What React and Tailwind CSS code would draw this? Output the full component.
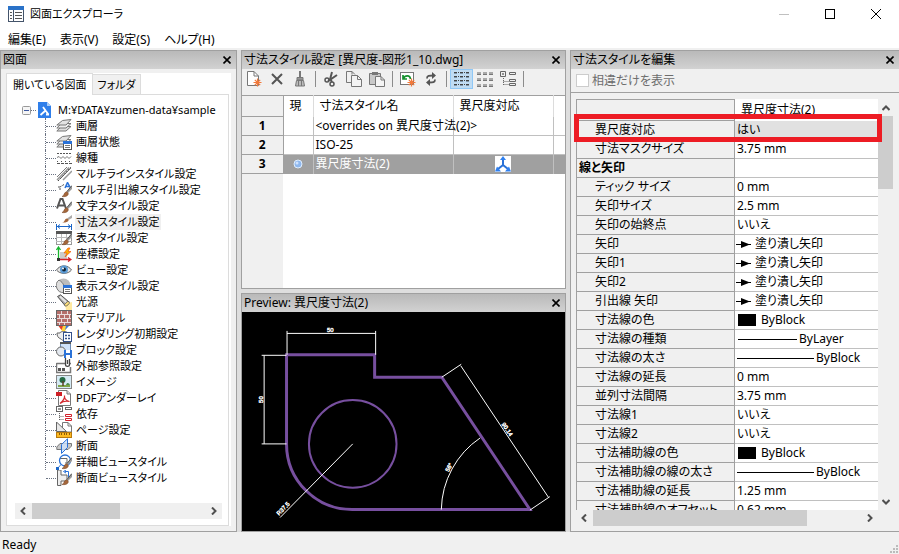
import React, { useState } from "react";

const menus = ["編集(E)", "表示(V)", "設定(S)", "ヘルプ(H)"];

const properties = [
    { name: "寸法マスクサイズ", value: "3.75 mm" },
    { name: "線と矢印", group: true },
    { name: "ティック サイズ", value: "0 mm" },
    { name: "矢印サイズ", value: "2.5 mm" },
    { name: "矢印の始終点", value: "いいえ" },
    { name: "矢印", value: "塗り潰し矢印", kind: "arrow" },
    { name: "矢印1", value: "塗り潰し矢印", kind: "arrow" },
    { name: "矢印2", value: "塗り潰し矢印", kind: "arrow" },
    { name: "引出線 矢印", value: "塗り潰し矢印", kind: "arrow" },
    { name: "寸法線の色", value: "ByBlock", kind: "color" },
    { name: "寸法線の種類", value: "ByLayer", kind: "linetype" },
    { name: "寸法線の太さ", value: "ByBlock", kind: "weight" },
    { name: "寸法線の延長", value: "0 mm" },
    { name: "並列寸法間隔", value: "3.75 mm" },
    { name: "寸法線1", value: "いいえ" },
    { name: "寸法線2", value: "いいえ" },
    { name: "寸法補助線の色", value: "ByBlock", kind: "color" },
    { name: "寸法補助線の線の太さ", value: "ByBlock", kind: "weight" },
    { name: "寸法補助線の延長", value: "1.25 mm" },
    { name: "寸法補助線のオフセット", value: "0.62 mm" },
];

const Icon = ({ children }) => (
    <svg width="16" height="16" viewBox="0 0 16 16" fill="none" className="shrink-0">
        {children}
    </svg>
);

// small paint brush, shared by the style icons
const Brush = () => (
    <>
        <path d="M16 3L10.5 9.5L12 11L16 7Z" fill="#9a9a9a" />
        <path d="M15.5 4L11 9.5" stroke="#555" />
        <path d="M6 14.5C8.5 14 7.500 10.500 10.500 9.800C13.500 10.500 13 15.500 6 14.500Z" fill="#a5673b" stroke="#7c4a28" strokeWidth=".6" />
    </>
);

// blue dialog window in the lower right corner
const MiniWindow = () => (
    <>
        <rect x="7.500" y="7.500" width="8" height="8" fill="#fff" stroke="#555" />
        <path d="M7 7H16V10H7Z" fill="#2a72d8" />
        <path d="M9 11.500H14M9 13.500H14" stroke="#777" />
    </>
);

const Sheets = () => (
    <>
        <path d="M.8 13L5.500 8.500H15L10 13Z" fill="#ddd" stroke="#777" />
        <path d="M.8 10L5.500 5.500H15L10 10Z" fill="#eee" stroke="#777" />
        <path d="M.8 7L6.500 2.500L15 1.500L10 7Z" fill="#e2e2e2" stroke="#777" />
    </>
);

const treeItems = [
    { name: "画層", icon: <Sheets /> },
    { name: "画層状態", icon: <><Sheets /><MiniWindow /></> },
    {
        name: "線種",
        icon: (
            <>
                <path d="M1 3.500H16" stroke="#555" strokeDasharray="2 1" />
                <path d="M1 7.500L3 6.500L5 8.500L7 6.500L9 8.500L11 6.500L13 8.500L15 6.500" stroke="#777" />
                <path d="M1 11.500H16" stroke="#555" strokeDasharray="1 3" />
                <path d="M1 13.500H16" stroke="#555" strokeDasharray="3 1" />
            </>
        ),
    },
    {
        name: "マルチラインスタイル設定",
        icon: (
            <>
                <path d="M1 11L11 1M4 13L15 2" stroke="#777" />
                <path d="M1 14L13 1.500M7 14L16 5" stroke="#999" strokeWidth="1.500" />
                <path d="M2 15L15 1" stroke="#444" strokeDasharray="2 1" />
            </>
        ),
    },
    {
        name: "マルチ引出線スタイル設定",
        icon: (
            <>
                <path d="M9 6L11.500 .5L14.500 6M10 4.500H13.500" stroke="#2a72d8" strokeWidth="1.500" />
                <path d="M8 2.500L4 5M3 4V7H6" stroke="#555" strokeDasharray="2 1" />
                <Brush />
            </>
        ),
    },
    {
        name: "文字スタイル設定",
        icon: (
            <>
                <path d="M1 10.500L4.500 1H6.500L10 10.500M2.500 7.500H9" stroke="#555" strokeWidth="2" />
                <Brush />
            </>
        ),
    },
    {
        name: "寸法スタイル設定",
        selected: true,
        icon: (
            <>
                <path d="M16 1L11 4.500L12.500 6L16 4Z" fill="#aaa" />
                <path d="M6 8.500C9 8.500 8 5 11 4.500C14 5.500 13 9 6 8.500Z" fill="#a5673b" />
                <path d="M.5 10V16M15.500 10V16" stroke="#1a66c8" />
                <path d="M1 12.500H15M4 10.500L1.500 12.500L4 14.500M12 10.500L14.500 12.500L12 14.500" stroke="#1a66c8" />
            </>
        ),
    },
    {
        name: "表スタイル設定",
        icon: (
            <>
                <rect x=".5" y="1.500" width="15" height="13" fill="#fff" stroke="#999" />
                <path d="M0 1H16V4H0Z" fill="#555" />
                <path d="M0 7.500H16M0 11.500H16M5.500 4V15M10.500 4V15" stroke="#bbb" />
                <Brush />
            </>
        ),
    },
    {
        name: "座標設定",
        icon: (
            <>
                <rect x="4" y="6" width="7" height="7" fill="#ccc" />
                <path d="M2.500 14V2M.5 4L2.500 1L4.500 4" stroke="#16b52c" strokeWidth="1.300" />
                <path d="M2 13.500H14M12 11.500L15 13.500L12 15.500" stroke="#d3202a" strokeWidth="1.300" />
                <path d="M12 2L8 7H11L9 11L15 5.500H12L14 2Z" fill="#ffb400" stroke="#f05a10" strokeWidth=".7" />
                <rect x="1" y="12" width="3" height="3" fill="#333" />
            </>
        ),
    },
    {
        name: "ビュー設定",
        icon: (
            <>
                <path d="M.5 8C4 2.500 12 2.500 15.500 8C12 12.500 4 12.500 .5 8Z" fill="#e6e6e6" stroke="#666" />
                <circle cx="8" cy="7.500" r="4" fill="#5b9bd5" />
                <circle cx="8" cy="7.500" r="2" fill="#123" />
                <circle cx="7" cy="6.500" r="1" fill="#fff" />
            </>
        ),
    },
    {
        name: "表示スタイル設定",
        icon: (
            <>
                <circle cx="7.500" cy="7.500" r="7" fill="#bcbcbc" />
                <path d="M3 2C8 5 9 9 8 14.500A7 7 0 0 1 3 2Z" fill="#dedede" stroke="#777" />
                <MiniWindow />
            </>
        ),
    },
    {
        name: "光源",
        icon: (
            <>
                <path d="M9 10L16 8V16H10Z" fill="#ffe9a0" />
                <path d="M1.500 2.500L4.500 .8L13 8L9 11.500Z" fill="#a8a8a8" stroke="#555" />
                <path d="M4 2.500L11 9" stroke="#e5e5e5" strokeWidth="2" />
                <ellipse cx="11" cy="9.800" rx="3" ry="1.500" transform="rotate(-42 11 9.800)" fill="#ffe07a" stroke="#555" strokeWidth=".7" />
            </>
        ),
    },
    {
        name: "マテリアル",
        icon: (
            <>
                <rect x=".5" y=".5" width="15" height="15" fill="#b56e6a" stroke="#666" />
                <path d="M1 4.500H15M1 8.500H15M1 12.500H15M5.500 1V4M11.500 1V4M8.500 5V8M3.500 5V8M13.500 5V8M5.500 9V12M11.500 9V12M8.500 13V15M3.500 13V15" stroke="#eadcdc" />
            </>
        ),
    },
    {
        name: "レンダリング初期設定",
        icon: (
            <>
                <path d="M3 0L6 5H9L12 0Z" fill="#ffd23c" />
                <path d="M2.500 0L5.500 4L7 0Z" fill="#e23b2e" />
                <path d="M10 0L9 4L13 0Z" fill="#3c78e0" />
                <path d="M1 7H4C4 5 11 5 12 7V12C10 15 6 15 5 13C2 12 1 10 1 7Z" fill="#eee" stroke="#666" />
                <rect x="7.500" y="6.500" width="8" height="9" fill="#fff" stroke="#33508a" />
                <path d="M9 9.500H14M9 12.500H14" stroke="#33508a" strokeWidth="1.500" strokeDasharray="2 1" />
            </>
        ),
    },
    {
        name: "ブロック設定",
        icon: (
            <>
                <rect x="4.500" y=".5" width="10" height="10" fill="#cfe2fa" stroke="#6d8db5" />
                <path d="M4 0H15V2H4Z" fill="#555" />
                <circle cx="5" cy="9.500" r="4.500" fill="#e3e8ef" stroke="#666" />
                <rect x="8" y="8" width="8" height="8" fill="#2a72d8" />
                <path d="M10 8H14V11H10ZM10 13H14V16H10Z" fill="#fff" />
            </>
        ),
    },
    {
        name: "外部参照設定",
        icon: (
            <>
                <path d="M.5 5.500H9M13.500 5.500H15M.5 5V14.500H14.500V9" stroke="#777" strokeWidth="1.500" />
                <path d="M9.500 0V6.500C9.500 9 13.500 9 13.500 6.500V1M11.500 2V6" stroke="#444" strokeWidth="1.300" />
                <path d="M2 10H5V13H2ZM6 10H9V13H6Z" fill="#555" />
            </>
        ),
    },
    {
        name: "イメージ",
        icon: (
            <>
                <rect x=".5" y="1.500" width="15" height="13" fill="#d6ebf5" stroke="#888" />
                <path d="M2 11H14V13H2Z" fill="#7fa548" />
                <circle cx="6.500" cy="6" r="3" fill="#256b45" />
                <path d="M7 7V12" stroke="#5b4028" strokeWidth="1.500" />
                <path d="M10 11C11 8 13 9 14 11Z" fill="#4c8c50" />
            </>
        ),
    },
    {
        name: "PDFアンダーレイ",
        icon: (
            <>
                <path d="M2.500 .5H11L14.500 4V15.500H2.500Z" fill="#fff" stroke="#777" />
                <path d="M11 .5V4H14.500" fill="#ddd" stroke="#777" />
                <path d="M0 2H6V6H0Z" fill="#cf1f25" />
                <path d="M4 13.500C7 11 9 8 8.500 5.500C8 8 10 11 13.500 11.500C10 10.500 7 11 4 13.500Z" stroke="#d3282e" strokeWidth="1.200" />
            </>
        ),
    },
    {
        name: "依存",
        icon: (
            <>
                <rect x=".5" y=".5" width="6" height="5" fill="#fff" stroke="#666" />
                <path d="M2 3H5" stroke="#333" />
                <rect x="9.500" y="1.500" width="6" height="2" fill="#fff" stroke="#666" />
                <path d="M3.500 7V14M3.500 10.500H8M3.500 13.500H8" stroke="#666" strokeDasharray="1 1" />
                <path d="M9.500 8.500H15.500V10.500H9.500ZM9.500 12.500H15.500V14.500H9.500Z" fill="#fff" stroke="#d3202a" />
            </>
        ),
    },
    {
        name: "ページ設定",
        icon: (
            <>
                <path d="M6.500 .5H12L15.500 4V10H6.500Z" fill="#fff" stroke="#777" />
                <path d="M12 .5V4H15.500" stroke="#777" />
                <path d="M.5 0V9.500H10.500Z" fill="#e8e8e8" stroke="#666" />
                <rect x=".5" y="10.500" width="15" height="5" fill="#fcb921" stroke="#b97a0c" />
                <path d="M3.500 11V13M5.500 11V13M8.500 11V13M10.500 11V13M13.500 11V13" stroke="#8a5a08" />
            </>
        ),
    },
    {
        name: "断面",
        icon: (
            <>
                <path d="M.8 9L4 5.500H15.500V8L12 11.500H.8Z" fill="#c9c9c9" stroke="#777" />
                <path d="M5.500 15.500V6.500L11.500 .8V9.500Z" fill="#cfe3fb" fillOpacity=".8" stroke="#2a72d8" />
            </>
        ),
    },
    {
        name: "詳細ビュースタイル",
        icon: (
            <>
                <path d="M4 4.500H11V9H9" stroke="#666" />
                <circle cx="9" cy="6.500" r="5.500" stroke="#2a72d8" strokeWidth="1.300" />
                <path d="M5 10.500L1.500 14.500" stroke="#2a72d8" />
                <rect x="0" y="13" width="3" height="3" fill="#1a66c8" />
                <Brush />
            </>
        ),
    },
    {
        name: "断面ビュースタイル",
        icon: (
            <>
                <path d="M1.500 0H5V5H11V11H5V15.500H1.500Z" fill="#eee" stroke="#666" />
                <path d="M9 1.500H12.500V10M10 0L7.500 1.500L10 3" stroke="#2a72d8" />
                <Brush />
            </>
        ),
    },
];

const PanelHeader = ({ title }) => (
    <div className="flex h-[18px] shrink-0 items-center justify-between bg-linear-to-b from-[#b9b9b9] to-[#d2d2d2] pl-[2px] pr-[5px]">
        <h2 className="whitespace-nowrap">{title}</h2>
        <button type="button" aria-label="閉じる" className="flex h-4 w-4 shrink-0 items-center justify-end">
            <svg width="8" height="8" viewBox="0 0 8 8" stroke="#000" strokeWidth="1.600">
                <path d="M.5 .5L7.500 7.500M7.500 .5L.5 7.500" />
            </svg>
        </button>
    </div>
);

const Chevron = ({ d }) => (
    <svg width="8" height="8" viewBox="0 0 8 8" fill="none" stroke="#505050" strokeWidth="2" className="shrink-0">
        <path d={d} />
    </svg>
);

const HorizontalBar = ({ thumb }) => (
    <div className="flex h-4 shrink-0 items-center gap-[5px] bg-[#f0f0f0] px-1">
        <Chevron d="M6 .5L2.500 4L6 7.500" />
        <div className="h-full flex-1">
            <div className="h-full bg-[#cdcdcd]" style={{ width: thumb }}></div>
        </div>
        <Chevron d="M2 .5L5.500 4L2 7.500" />
    </div>
);

const ToolButton = ({ label, active, children }) => (
    <button
        type="button"
        aria-label={label}
        className={
            active
                ? "flex h-5 w-[23px] items-center justify-center border border-[#90c8f6] bg-[#c0dcf3]"
                : "flex h-5 w-[23px] items-center justify-center"
        }
    >
        <Icon>{children}</Icon>
    </button>
);

const Separator = () => (
    <div className="flex w-2 justify-center pt-[2px]">
        <div className="h-4 w-px bg-[#8c8c8c]"></div>
    </div>
);

const Spark = () => (
    <path d="M11.500 7.500V15.500M7.500 11.500H15.500M8.800 8.800L14.200 14.200M14.200 8.800L8.800 14.200" stroke="#f2793a" strokeWidth="1.200" />
);

const Toolbar = () => (
    <div className="flex h-[26px] shrink-0 items-start">
        <ToolButton label="新規">
            <path d="M1.500 .5H8L12.500 5V14.500H1.500Z" fill="#fff" stroke="#777" />
            <path d="M8 .5V5H12.500" stroke="#777" />
            <Spark />
        </ToolButton>
        <ToolButton label="削除">
            <path d="M3 3L13 13M13 3L3 13" stroke="#555" strokeWidth="2" />
        </ToolButton>
        <ToolButton label="名前削除">
            <path d="M7 0H9V6H7Z" fill="#777" />
            <path d="M5 6.500H11V9H5Z" fill="#999" stroke="#777" />
            <path d="M4.500 9.500H11.500L12.500 15H3.500Z" fill="#bbb" stroke="#777" />
            <path d="M6.500 10V15M9.500 10V15" stroke="#777" />
        </ToolButton>
        <Separator />
        <ToolButton label="切り取り">
            <path d="M9 1L7 8.500L5 10M14 4L7.500 8.500L9 11" stroke="#555" strokeWidth="2" />
            <circle cx="4" cy="9" r="2" stroke="#555" strokeWidth="1.500" />
            <circle cx="9" cy="13" r="2" stroke="#555" strokeWidth="1.500" />
        </ToolButton>
        <ToolButton label="コピー">
            <path d="M5 11.500H.5V.5H6L9 3.500" stroke="#777" />
            <path d="M6 .5V3.500" stroke="#777" />
            <path d="M5.500 4.500H11.500L15.500 8.500V15.500H5.500Z" fill="#f4f4f4" stroke="#777" />
            <path d="M11.500 4.500V8.500H15.500" stroke="#777" />
        </ToolButton>
        <ToolButton label="貼り付け">
            <path d="M.5 2.500H11.500V13.500H.5Z" fill="#c8c8c8" stroke="#777" />
            <path d="M3 1H9V4H3Z" fill="#777" />
            <path d="M6.500 5.500H12L15.500 9V15.500H6.500Z" fill="#f4f4f4" stroke="#777" />
            <path d="M12 5.500V9H15.500" stroke="#777" />
        </ToolButton>
        <Separator />
        <ToolButton label="再作成">
            <rect x=".5" y="1.500" width="13" height="12" fill="#fff" stroke="#777" />
            <path d="M3 4V8H7M3.500 7.500C5 4 10 4 10.500 8" stroke="#16912f" strokeWidth="1.700" />
            <Spark />
        </ToolButton>
        <ToolButton label="更新">
            <path d="M4 7.500C4 4.500 6 4.500 10 4.500M12 8.500C12 11.500 10 11.500 6 11.500" stroke="#555" strokeWidth="1.800" />
            <path d="M9 1V8L13 4.500ZM7 8V15L3 11.500Z" fill="#555" />
        </ToolButton>
        <Separator />
        <ToolButton label="詳細" active>
            <path d="M0 1.500H16M0 5.500H16M0 9.500H16M0 13.500H16" stroke="#444" strokeDasharray="3 1 1 1" />
            <path d="M0 2.500H16M0 6.500H16M0 10.500H16M0 14.500H16" stroke="#7d96ac" strokeDasharray="3 3" />
        </ToolButton>
        <ToolButton label="アイコン">
            <path d="M0 2H16M0 8H16M0 14H16" stroke="#a9a9a9" strokeWidth="2" strokeDasharray="4 2" />
            <path d="M0 3.500H16M0 9.500H16M0 15.500H16" stroke="#777" strokeDasharray="4 2" />
        </ToolButton>
        <ToolButton label="ツリー">
            <path d="M.5 .5H5.500V5.500H.5ZM9.500 1.500H15.500V3.500H9.500ZM9.500 8.500H15.500V10.500H9.500ZM9.500 12.500H15.500V14.500H9.500Z" stroke="#666" />
            <path d="M2 3H4" stroke="#333" />
            <path d="M3.500 7V14M3.500 10.500H9M3.500 13.500H9" stroke="#666" strokeDasharray="1 1" />
        </ToolButton>
        <Separator />
    </div>
);

const DrawingTree = () => (
    <section className="flex min-h-0 min-w-0 flex-col border border-[#a0a0a0]">
        <PanelHeader title="図面" />
        <div className="flex min-h-0 flex-1 flex-col p-[5px] pt-1">
            <div className="flex min-h-0 flex-1 flex-col bg-white pr-[2px]">
                <div className="flex h-[21px] shrink-0 items-end" role="tablist">
                    <button type="button" role="tab" aria-selected="true" className="relative -mb-px h-[22px] whitespace-nowrap border border-b-0 border-[#dcdcdc] bg-white px-[6px] text-[11px]">
                        開いている図面
                    </button>
                    <button type="button" role="tab" aria-selected="false" className="h-5 whitespace-nowrap border border-b-0 border-l-0 border-[#dcdcdc] bg-[#f0f0f0] px-1 text-[11px]">
                        フォルダ
                    </button>
                </div>
                <div className="flex min-h-0 flex-1 flex-col justify-between overflow-hidden border border-[#dcdcdc] pb-[6px] pl-2 pr-[6px] pt-[7px]">
                    <ul role="tree" className="text-[11px] leading-4">
                        <li role="treeitem" aria-expanded="true">
                            <div className="flex h-4 items-center pl-[7px]">
                                <svg width="9" height="9" viewBox="0 0 9 9" className="shrink-0">
                                    <rect x=".5" y=".5" width="8" height="8" rx="1" fill="#f5f5f5" stroke="#999" />
                                    <path d="M2 4.500H7" stroke="#3a56a0" />
                                </svg>
                                <div className="mr-[2px] w-[5px] border-t border-dotted border-gray-500"></div>
                                <svg width="13" height="16" viewBox="0 0 13 16" className="shrink-0">
                                    <path d="M0 0H9L13 4V16H0Z" fill="#2f7fea" />
                                    <path d="M9 0V4H13Z" fill="#a9cdf8" />
                                    <path d="M5 5L7.500 8.500L10.500 12.500M7.500 8.500L2.500 13M8 12.500H11" fill="none" stroke="#fff" strokeWidth="1.800" />
                                </svg>
                                <span className="ml-[7px] whitespace-nowrap">M:¥DATA¥zumen-data¥sample</span>
                            </div>
                            <ul role="group" className="ml-[30px]">
                                {treeItems.map((item) => (
                                    <li key={item.name} role="treeitem" className="flex h-4 items-center border-l border-dotted border-gray-500 last:border-l-0 last:pl-px">
                                        <div className="w-[10px] shrink-0 border-t border-dotted border-gray-500"></div>
                                        <Icon>{item.icon}</Icon>
                                        <span className={item.selected ? "ml-[3px] whitespace-nowrap bg-[#f0f0f0] px-px" : "ml-1 whitespace-nowrap"}>
                                            {item.name}
                                        </span>
                                    </li>
                                ))}
                            </ul>
                        </li>
                    </ul>
                    <HorizontalBar thumb="51%" />
                </div>
            </div>
        </div>
    </section>
);

const StyleList = () => (
    <section className="flex min-h-0 flex-1 flex-col border border-[#a0a0a0] bg-[#f0f0f0]">
        <PanelHeader title="寸法スタイル設定 [異尺度-図形1_10.dwg]" />
        <Toolbar />
        <table className="w-full table-fixed border-collapse bg-white text-[12px] leading-4">
            <colgroup>
                <col className="w-[41px]" />
                <col className="w-[30px]" />
                <col className="w-[140px]" />
                <col className="w-[100px]" />
                <col />
            </colgroup>
            <thead>
                <tr className="h-[21px] border-t border-[#a0a0a0] text-left">
                    <th className="border-b border-r border-[#a0a0a0] bg-[#f0f0f0]"></th>
                    <th className="border-r border-[#dcdcdc] pl-[6px] font-normal">現</th>
                    <th className="border-r border-[#dcdcdc] pl-[6px] font-normal">寸法スタイル名</th>
                    <th className="border-r border-[#dcdcdc] pl-[6px] font-normal">異尺度対応</th>
                    <th></th>
                </tr>
            </thead>
            <tbody>
                <tr className="h-[19px]">
                    <th className="border-b border-r border-[#a0a0a0] bg-[#f0f0f0]">1</th>
                    <td className="border-b border-r border-[#c0c0c0]"></td>
                    <td className="whitespace-nowrap border-b border-r border-[#c0c0c0] pl-[2px]">&lt;overrides on 異尺度寸法(2)&gt;</td>
                    <td className="border-b border-r border-[#c0c0c0]"></td>
                    <td className="border-b border-[#c0c0c0]"></td>
                </tr>
                <tr className="h-[19px]">
                    <th className="border-b border-r border-[#a0a0a0] bg-[#f0f0f0]">2</th>
                    <td className="border-b border-r border-[#c0c0c0]"></td>
                    <td className="border-b border-r border-[#c0c0c0] pl-[2px]">ISO-25</td>
                    <td className="border-b border-r border-[#c0c0c0]"></td>
                    <td className="border-b border-[#c0c0c0]"></td>
                </tr>
                <tr className="h-[19px] bg-[#a0a0a0] text-white">
                    <th className="border-b border-r border-[#a0a0a0] bg-[#f0f0f0] text-black">3</th>
                    <td className="border-r border-[#c0c0c0]">
                        <svg width="10" height="10" viewBox="0 0 10 10" className="mx-auto">
                            <circle cx="5" cy="5" r="4" fill="#8fb8ee" stroke="#dfeeff" />
                            <circle cx="4" cy="4" r="1.500" fill="#cfe3ff" />
                        </svg>
                    </td>
                    <td className="border-r border-[#c0c0c0] pl-[2px]">異尺度寸法(2)</td>
                    <td className="border-r border-[#c0c0c0]">
                        <svg width="16" height="16" viewBox="0 0 16 16" className="mx-auto">
                            <rect width="16" height="16" fill="#fff" />
                            <path d="M8 2V9L3 13M8 9L13 13" fill="none" stroke="#2a72d8" strokeWidth="2" />
                            <path d="M8 0L11 4H5ZM0 15.500L2 10.500L6 15.500ZM16 15.500L14 10.500L10 15.500Z" fill="#2f80f0" />
                        </svg>
                    </td>
                    <td></td>
                </tr>
            </tbody>
        </table>
        <div className="flex flex-1 bg-white">
            <div className="w-[41px] bg-[#f0f0f0]"></div>
        </div>
    </section>
);

const Preview = () => (
    <section className="flex min-h-0 flex-1 flex-col border border-[#a0a0a0]">
        <PanelHeader title="Preview: 異尺度寸法(2)" />
        <div className="min-h-0 flex-1 bg-black">
            <svg viewBox="0 0 323 220" className="h-full w-full" fill="none">
                <g stroke="#774f9f" strokeWidth="3">
                    <path d="M44 132.500V43H132.500V65.500H200L288.500 198.500H110.500A66 66 0 0 1 44 132.500Z" />
                    <circle cx="110.500" cy="132.500" r="44" strokeWidth="2" />
                </g>
                <g stroke="#fff" strokeWidth="1">
                    <path d="M44.500 43V19M133.500 43V19M44.500 21.500H133.500" />
                    <path d="M44 43.500H19M44 132.500H19M21.500 43.500V132.500" />
                    <path d="M110.500 132.500L37.500 206.500" />
                    <path d="M200 65.500L219.500 52.500M288.500 199L308.500 185.500M219 54L307 186" />
                    <path d="M199.500 198.500A89 89 0 0 1 238.500 126.500" />
                </g>
                <g fill="#fff" stroke="#fff" strokeWidth=".4" fontSize="6" fontFamily="Liberation Sans, sans-serif" textAnchor="middle">
                    <text x="88" y="20">50</text>
                    <text transform="translate(20 88) rotate(-90)">50</text>
                    <text transform="translate(42 199) rotate(-45)">R37.5</text>
                    <text transform="translate(264 119) rotate(56)">90.14</text>
                    <text transform="translate(209 157) rotate(-62)">56°</text>
                </g>
            </svg>
        </div>
    </section>
);

const PropertyValue = ({ kind, value }) => {
    if (kind === "arrow") {
        return (
            <div className="flex items-center gap-1">
                <svg width="15" height="7" viewBox="0 0 15 7" className="shrink-0">
                    <path d="M0 3.500H15" stroke="#000" />
                    <path d="M5 0V7L14 3.500Z" />
                </svg>
                {value}
            </div>
        );
    }
    if (kind === "color") {
        return (
            <div className="flex items-center gap-[5px] pl-[2px]">
                <div className="h-3 w-[18px] bg-black"></div>
                {value}
            </div>
        );
    }
    if (kind === "linetype") {
        return (
            <div className="flex items-center gap-[2px] pl-[2px]">
                <div className="h-px w-[59px] bg-black"></div>
                {value}
            </div>
        );
    }
    if (kind === "weight") {
        return (
            <div className="flex items-center gap-[2px] pl-px">
                <div className="h-px w-[77px] bg-black"></div>
                {value}
            </div>
        );
    }
    return <div className="pl-px">{value}</div>;
};

const StyleEditor = () => {
    const [annotative, setAnnotative] = useState("はい");

    return (
        <section className="flex min-h-0 min-w-0 flex-col border border-r-0 border-[#a0a0a0]">
            <PanelHeader title="寸法スタイルを編集" />
            <div className="flex h-6 shrink-0 items-center border-b border-[#a0a0a0] pl-[5px] text-[#6d6d6d]">
                <input id="diffOnly" type="checkbox" disabled className="h-[13px] w-[13px] appearance-none border border-[#ccc] bg-white" />
                <label htmlFor="diffOnly" className="pl-[3px]">相違だけを表示</label>
            </div>
            <div className="flex min-h-0 flex-1 flex-col pb-[5px] pl-[5px] pr-[6px] pt-[6px]">
                <div className="relative flex min-h-0 flex-1">
                    <div className="min-w-0 flex-1 overflow-hidden bg-white">
                        <table className="w-full table-fixed border-collapse border-l border-[#a0a0a0] text-[12px] leading-4">
                            <colgroup>
                                <col className="w-[158px]" />
                                <col />
                            </colgroup>
                            <thead>
                                <tr className="h-[21px]">
                                    <th className="border border-[#a0a0a0] bg-[#f0f0f0]"></th>
                                    <th className="pl-[6px] text-left font-normal">異尺度寸法(2)</th>
                                </tr>
                            </thead>
                            <tbody>
                                <tr className="h-[19px]">
                                    <th className="border-b border-r border-[#a0a0a0] bg-[#f0f0f0] text-left font-normal">
                                        <label htmlFor="annotative" className="pl-[18px]">異尺度対応</label>
                                    </th>
                                    <td className="bg-[#e1e1e1]">
                                        <select
                                            id="annotative"
                                            value={annotative}
                                            onChange={(e) => setAnnotative(e.target.value)}
                                            className="block h-4 w-full appearance-none bg-transparent pl-[2px]"
                                        >
                                            <option>はい</option>
                                            <option>いいえ</option>
                                        </select>
                                    </td>
                                </tr>
                                {properties.map((prop) => (
                                    <tr key={prop.name} className="h-[19px]">
                                        <th
                                            className={
                                                prop.group
                                                    ? "whitespace-nowrap border-b border-r border-[#a0a0a0] bg-[#f0f0f0] pl-[2px] text-left font-bold"
                                                    : "whitespace-nowrap border-b border-r border-[#a0a0a0] bg-[#f0f0f0] pl-[18px] text-left font-normal"
                                            }
                                        >
                                            {prop.name}
                                        </th>
                                        <td className="whitespace-nowrap border-b border-[#c0c0c0] pl-px">
                                            <PropertyValue kind={prop.kind} value={prop.value} />
                                        </td>
                                    </tr>
                                ))}
                            </tbody>
                        </table>
                    </div>
                    <div className="flex w-[15px] flex-col items-center justify-between bg-[#f0f0f0] pb-1 pt-[5px]">
                        <Chevron d="M.5 6L4 2.500L7.500 6" />
                        <div className="mt-1 w-full flex-1">
                            <div className="w-full bg-[#cdcdcd]" style={{ height: "19%" }}></div>
                        </div>
                        <Chevron d="M.5 2L4 5.500L7.500 2" />
                    </div>
                    {/* highlight around the annotative row */}
                    <div className="pointer-events-none absolute -left-[2px] right-[11px] top-[15px] h-7 border-[5px] border-[#ed1c24]"></div>
                </div>
                <div className="mr-[15px]">
                    <HorizontalBar thumb="80%" />
                </div>
            </div>
        </section>
    );
};

const App = () => {
    return (
        <div className="flex h-screen flex-col overflow-hidden bg-[#f0f0f0] font-['Noto_Sans','Noto_Sans_CJK_JP',sans-serif] text-[12px] leading-4 text-black [font-feature-settings:'palt']">
            <header className="shrink-0 bg-white">
                <div className="flex h-7 items-center pl-2">
                    <Icon>
                        <rect x=".5" y=".5" width="15" height="15" fill="#fff" stroke="#44546a" />
                        <path d="M0 0H16V4H0Z" fill="#2a72c8" />
                        <path d="M5.500 4V15" stroke="#44546a" />
                        <path d="M2 6.500H4M2 9.500H4M2 12.500H4M7 6.500H14M7 9.500H14M7 12.500H14" stroke="#555" />
                    </Icon>
                    <h1 className="flex-1 pl-[6px] text-[11px]">図面エクスプローラ</h1>
                    <button type="button" aria-label="最小化" className="flex h-7 w-[46px] items-center justify-center">
                        <div className="h-px w-[10px] bg-[#c0c0c0]"></div>
                    </button>
                    <button type="button" aria-label="最大化" className="flex h-7 w-[46px] items-center justify-center">
                        <div className="h-[10px] w-[10px] border border-black"></div>
                    </button>
                    <button type="button" aria-label="閉じる" className="flex h-7 w-[46px] items-center justify-center">
                        <svg width="10" height="10" viewBox="0 0 10 10" stroke="#000">
                            <path d="M0 0L10 10M10 0L0 10" />
                        </svg>
                    </button>
                </div>
                <nav className="flex h-5 items-center gap-[14px] pl-2 pt-[3px]">
                    {menus.map((menu) => (
                        <button key={menu} type="button" className="whitespace-nowrap">{menu}</button>
                    ))}
                </nav>
            </header>
            <main className="mt-[2px] grid min-h-0 flex-1 grid-cols-[237fr_325fr_329fr] gap-1 bg-[#dedede] *:bg-[#f0f0f0]">
                <DrawingTree />
                <div className="flex min-h-0 min-w-0 flex-col gap-1 bg-[#dedede]!">
                    <StyleList />
                    <Preview />
                </div>
                <StyleEditor />
            </main>
            <footer className="flex h-[22px] shrink-0 items-end justify-between pb-px pl-[2px] pr-px">
                <span>Ready</span>
                <svg width="8" height="8" viewBox="0 0 8 8" fill="#bbb">
                    <path d="M6 0H8V2H6ZM3 3H5V5H3ZM6 3H8V5H6ZM0 6H2V8H0ZM3 6H5V8H3ZM6 6H8V8H6Z" />
                </svg>
            </footer>
        </div>
    );
};

export default App;
